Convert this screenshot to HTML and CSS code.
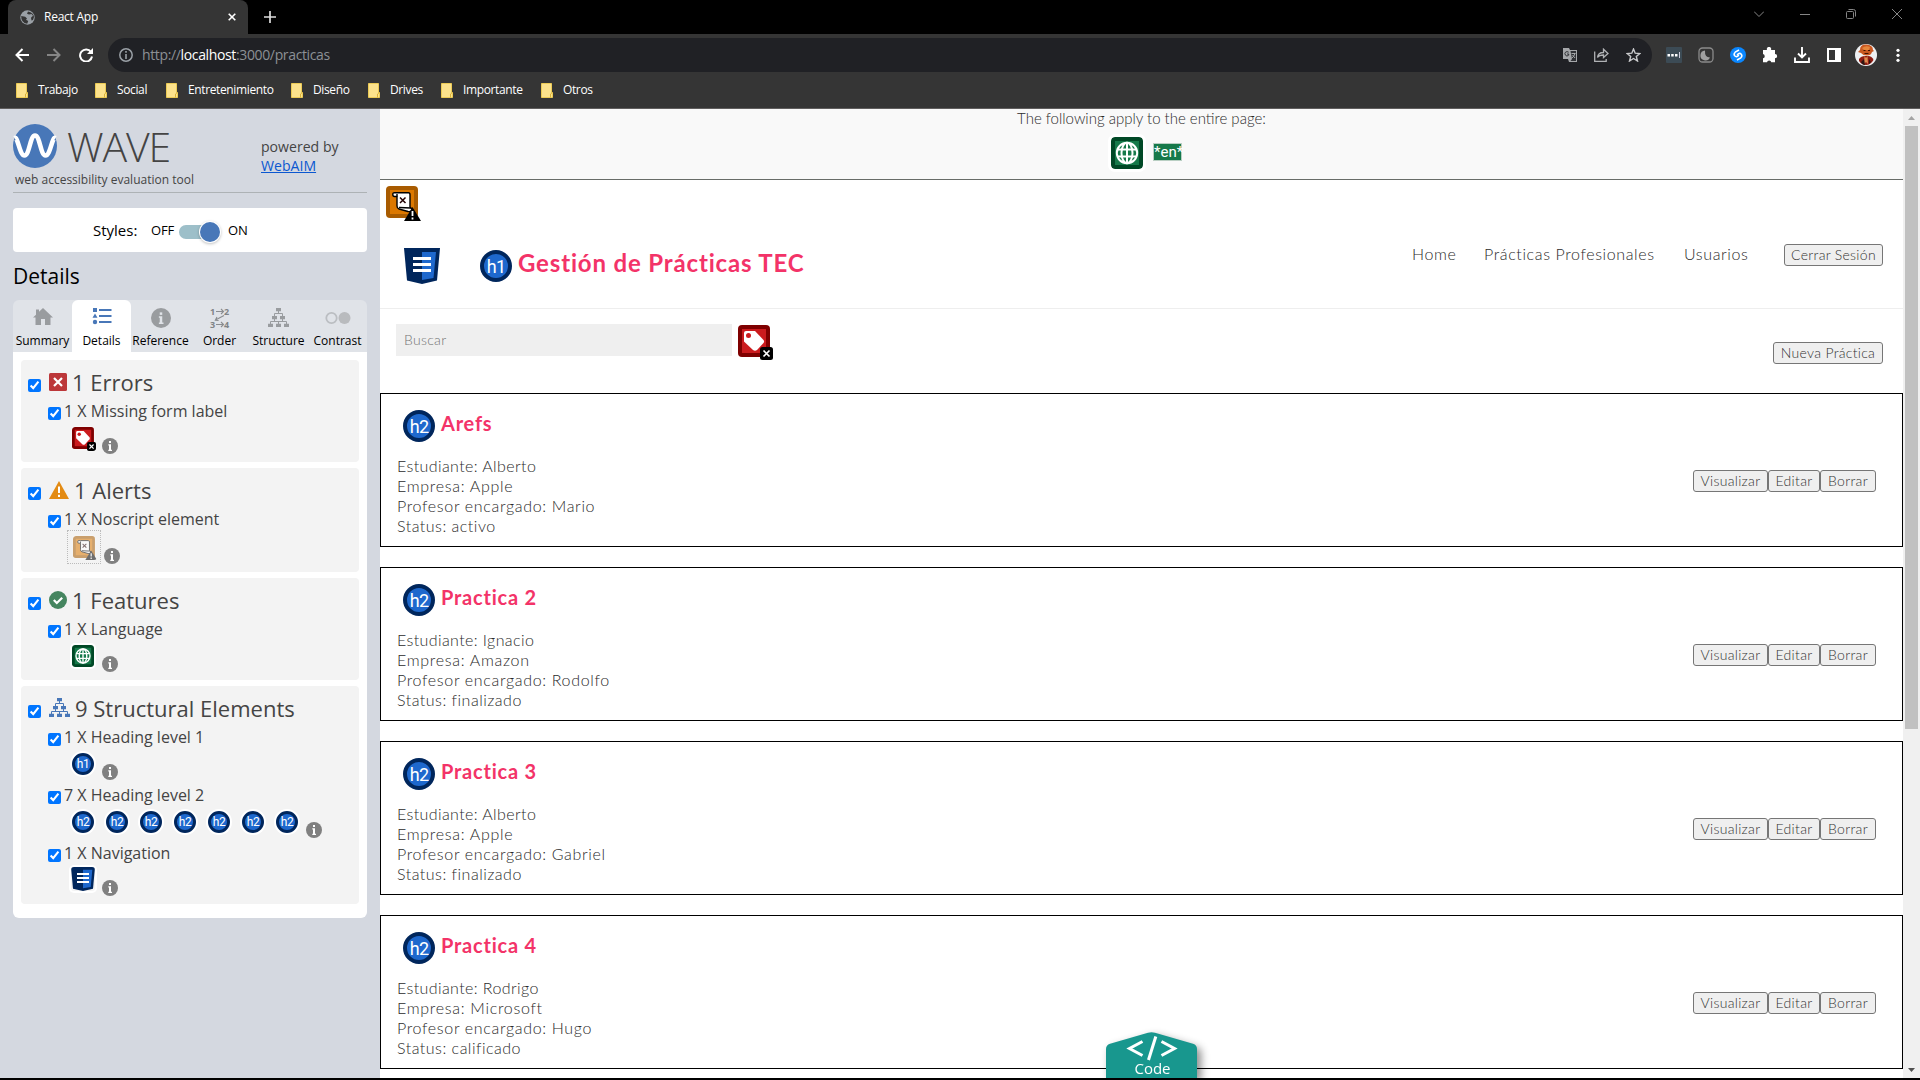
FILE: index.html
```html
<!DOCTYPE html>
<html lang="es">
<head>
<meta charset="utf-8">
<title>React App</title>
<link rel="stylesheet" href="styles.css">
</head>
<body>
<svg class="sprite" width="0" height="0">
  <symbol id="folder" viewBox="0 0 12 15"><path d="M.5.5h10v9h1v5H.5z" fill="#fce28c" stroke="#eccb55"/><path d="M9.500 14.500v-3.500l2-1.500" fill="none" stroke="#d9b23a"/></symbol>
  <symbol id="info" viewBox="0 0 16 16"><circle cx="8" cy="8" r="8" fill="#808080"/><rect x="7" y="3" width="2" height="2" fill="#fff"/><path d="M6.300 6.300H9v5.500h1v1.200H6.300v-1.200H7V7.500h-.7z" fill="#fff"/></symbol>
  <symbol id="tree" viewBox="0 0 21 19"><path d="M8 0h5v3.300H8zM4 8h5v3.200H4zM12 8h5v3.200h-5zM0 15.700h5V19H0zM8 15.700h5V19H8zM16 15.700h5V19h-5z" fill="currentColor"/><path d="M10.500 3v2.500M6.500 8V5.500h8V8M6.500 11v2.500M14.500 11v2.500M2.500 16v-2.500h16V16M10.500 13.500V16" fill="none" stroke="currentColor"/></symbol>
  <symbol id="label" viewBox="0 0 35 35"><rect width="32" height="32" rx="4" fill="#7f0000"/><rect x="4" y="4" width="24" height="24" fill="#cb1b1e"/><path d="M6 8q0-2 2-2h9l8.500 9q1.200 1.500 0 3l-6.500 7q-2 1.600-4 0L6 16.500z" fill="#fff"/><circle cx="10.500" cy="10.500" r="2.500" fill="#cb1b1e"/><rect x="22" y="22" width="13" height="13" rx="2.500" fill="#000"/><path d="M25.500 25.500l6 6m0-6l-6 6" stroke="#fff" stroke-width="1.700"/></symbol>
  <symbol id="noscript" viewBox="0 0 35 35"><rect width="32" height="32" rx="4" fill="#a85b00"/><rect x="4" y="4" width="24" height="24" fill="#dc7800"/><path d="M11 6.700h11.500q1.500 0 1.500 2V21l3 3q-2 2-5 1.500L13 23q-2-.5-2-3V10.500H8.500Q6.800 10.500 6.800 8.500t2-1.800H11z" fill="#fff" stroke="#000" stroke-width="1.400"/><path d="M11 10.500V8M13 21.500l12 .5" fill="none" stroke="#000" stroke-width="1.400"/><path d="M14 11.500l5.500 5.500m0-5.500L14 17" stroke="#200" stroke-width="1.500"/><path d="M26.500 21L35 35H18z" fill="#000"/><path d="M26.500 25v5m0 1.500v2" stroke="#fff" stroke-width="1.800"/></symbol>
  <symbol id="globe" viewBox="0 0 32 32"><rect width="32" height="32" rx="4" fill="#004826"/><rect x="4" y="4" width="24" height="24" fill="#16794a"/><g fill="none" stroke="#fff" stroke-width="2"><circle cx="16" cy="16" r="10.200"/><ellipse cx="16" cy="16" rx="5.500" ry="10.200"/><path d="M7 12.500h18M7 19.500h18M16 6v20"/></g></symbol>
  <symbol id="nav" viewBox="0 0 36 36"><path d="M0 0h36l-3 32.500L18 36 3 32.500z" fill="#00265c"/><path d="M18 4h14l-2.500 26L18 32z" fill="#1e68cd"/><path d="M9 10.500h18M9 16.500h18M9 22.500h18" stroke="#fff" stroke-width="3"/></symbol>
</svg>

<div class="window">
  <header class="chrome">
    <div class="tabstrip">
      <div class="browser-tab">
        <svg width="15" height="15" viewBox="0 0 15 15"><circle cx="7.500" cy="7.500" r="7.200" fill="#9aa0a6"/><path d="M1.200 6l4 .8 1.800 1.700-1 1.300 2.200 1.200-1 2.800Q1 13 1.200 6zM8 1.500l-1 2.300 2 .7 2.500-.5 1.500 1.800-2 2 .5 2.700 1.500-.5 1-3Q13.500 2.500 8 1.500z" fill="#353535"/></svg>
        <span class="tab-title">React App</span>
        <svg class="tab-close" width="8" height="8" viewBox="0 0 8 8"><path d="M.7.7l6.600 6.600m0-6.600L.7 7.300" stroke="#fff" stroke-width="1.600"/></svg>
      </div>
      <svg class="new-tab" width="12" height="12" viewBox="0 0 12 12"><path d="M6 0v12M0 6h12" stroke="#ddd" stroke-width="1.700"/></svg>
      <div class="window-buttons">
        <svg width="10" height="10" viewBox="0 0 10 10"><path d="M0 2.500l5 5 5-5"/></svg>
        <svg width="10" height="10" viewBox="0 0 10 10"><path d="M0 5.500h10"/></svg>
        <svg width="10" height="10" viewBox="0 0 10 10"><rect x=".5" y="2.500" width="7" height="7" rx="1"/><path d="M2.500.5h5q2 0 2 2v5"/></svg>
        <svg width="10" height="10" viewBox="0 0 10 10"><path d="M0 0l10 10m0-10L0 10"/></svg>
      </div>
    </div>
    <div class="toolbar">
      <div class="nav-buttons">
        <svg width="14" height="14" viewBox="0 0 14 14" stroke="#fff"><path d="M14 7H1.500M7.500 1L1.500 7l6 6"/></svg>
        <svg width="14" height="14" viewBox="0 0 14 14" stroke="#858585"><path d="M0 7h12.500M6.500 1l6 6-6 6"/></svg>
        <svg width="14" height="14" viewBox="0 0 14 14" stroke="#fff"><path d="M12 4A6 6 0 1 0 13 8.500"/><path d="M14 0v6H8z" fill="#fff" stroke="none"/></svg>
      </div>
      <div class="omnibox">
        <svg width="14" height="14" viewBox="0 0 14 14"><circle cx="7" cy="7" r="6.200" fill="none" stroke="#9aa0a6" stroke-width="1.500"/><path d="M7 3v1.800M7 6v5" stroke="#9aa0a6" stroke-width="1.600"/></svg>
        <span class="url">http://<b>localhost</b>:3000/practicas</span>
        <div class="omni-icons">
          <svg width="14" height="14" viewBox="0 0 14 14"><path d="M0 0h6l1 2h7v12H6l-1-3H0z" fill="#a5a7aa"/><path d="M7.500 3H13v10H7.500l1.500-2z" fill="#303236"/><path d="M5.700 4.200Q3.800 3 2.500 4.200t0 3 3.200 0V6H4" fill="none" stroke="#303236"/><path d="M8.500 5.500h4M12 5.500q-1 3-3 4.500M9.500 7l2.500 3" fill="none" stroke="#a5a7aa"/></svg>
          <svg width="15" height="14" viewBox="0 0 15 14" fill="none" stroke="#b0b2b5" stroke-width="1.300"><path d="M.7 3.500v9.800h11.500V11M3.500 9.500q.5-5 6-5V1.200L14 5.500l-4.500 4V7Q5 7 3.500 9.500z"/></svg>
          <svg width="15" height="14" viewBox="0 0 15 14"><path d="M7.500 1l1.700 4.200 4.600.3-3.500 3 1.200 4.500-4-2.500-4 2.500 1.200-4.500-3.500-3 4.600-.3z" fill="none" stroke="#c8c9cb" stroke-width="1.400"/></svg>
        </div>
      </div>
      <div class="extensions">
        <svg width="16" height="16" viewBox="0 0 16 16"><rect width="16" height="16" rx="1" fill="#3c4b55"/><path d="M1.500 7h2.500v2.500H1.500zM5.200 7h2.500v2.500H5.200zM9 7h2.500v2.500H9z" fill="#fff"/><path d="M13.500 5v6" stroke="#ccd"/></svg>
        <svg width="16" height="16" viewBox="0 0 16 16"><rect x="1" y="1" width="14" height="14" rx="3.500" fill="none" stroke="#8b8b8b" stroke-width="1.300"/><path d="M7 3.500A5 5 0 1 0 12 10.500Q6.500 10.500 7 3.500z" fill="#a0a0a0"/></svg>
        <svg width="16" height="16" viewBox="0 0 16 16"><circle cx="8" cy="8" r="8" fill="#0a87ff"/><path d="M9 3L5.200 5.200Q3.300 7 4.700 8.800q1.500 1.500 3 .3L9 8.200M7 13l3.800-2.200q1.900-1.800.5-3.600-1.500-1.500-3-.3L7 7.800" fill="none" stroke="#fff" stroke-width="1.500"/></svg>
        <svg width="16" height="16" viewBox="0 0 16 16"><path d="M1 3h4a2.200 2.200 0 1 1 4 0h4v4a2.100 2.100 0 1 1 0 4.300v4H9.300a2.200 2.200 0 0 0-4.300 0H1v-4a2.200 2.200 0 0 0 0-4.300z" fill="#fff"/></svg>
        <svg width="16" height="16" viewBox="0 0 16 16" fill="none" stroke="#fff" stroke-width="1.900"><path d="M8 0v10M4 6.500l4 4 4-4M1 10.500V15h14v-4.500"/></svg>
        <svg width="16" height="16" viewBox="0 0 16 16"><path d="M1 1h14v14H1zM3 3v10h6V3z" fill="#fff" fill-rule="evenodd"/></svg>
        <svg width="22" height="22" viewBox="0 0 22 22"><circle cx="11" cy="11" r="11" fill="#eef0f2"/><path d="M5 6q0-6 6.500-5.500T18 6l1 1-2 1q-1 3.500-5 3.500T6 9L3 8z" fill="#c95821"/><path d="M7 4q4-3 8-1l-1 3H9z" fill="#e6863b"/><path d="M8.500 6.500h2m2.500 0h2M9.500 9.500h4" stroke="#401000" stroke-width="1.200"/><path d="M4 15q2-3 6-3h3q4 0 5.500 4-3 5-7.500 5T4 17z" fill="#8f1c12"/><path d="M9.500 12l1.500 2 1.500-2 .5 8-2-2-2 2z" fill="#e08a50"/><path d="M6 18l3-3 1 6q-3 0-4-3zM14 15l2 3-2 2z" fill="#2d1512"/></svg>
        <svg width="16" height="16" viewBox="0 0 16 16" fill="#fff"><circle cx="8" cy="3.300" r="1.600"/><circle cx="8" cy="8.300" r="1.600"/><circle cx="8" cy="13.300" r="1.600"/></svg>
      </div>
    </div>
    <nav class="bookmarks">
      <span class="bm bm1"><svg><use href="#folder"/></svg>Trabajo</span>
      <span class="bm bm2"><svg><use href="#folder"/></svg>Social</span>
      <span class="bm bm3"><svg><use href="#folder"/></svg>Entretenimiento</span>
      <span class="bm bm4"><svg><use href="#folder"/></svg>Diseño</span>
      <span class="bm bm5"><svg><use href="#folder"/></svg>Drives</span>
      <span class="bm bm6"><svg><use href="#folder"/></svg>Importante</span>
      <span class="bm bm7"><svg><use href="#folder"/></svg>Otros</span>
    </nav>
  </header>

  <div class="content">
    <aside class="wave">
      <div class="brand">
        <div class="brand-left">
          <div class="logo">
            <svg width="44" height="44" viewBox="0 0 44 44"><circle cx="22" cy="22" r="22" fill="#4877b8"/><path d="M1.500 14C5 12 6.500 31.500 11.500 31.500S17 11.500 22 11.500 27.500 31.500 32.500 31.500 39 12 42.500 14" fill="none" stroke="#fff" stroke-width="4.600"/></svg>
            <span class="logo-text">WAVE</span>
          </div>
          <p class="tagline">web accessibility evaluation tool</p>
        </div>
        <p class="powered">powered by<br><a>WebAIM</a></p>
      </div>
      <div class="styles-card">
        <span class="styles-label">Styles:</span><span class="off">OFF</span>
        <span class="toggle"><i></i></span><span class="on">ON</span>
      </div>
      <h2 class="details-title">Details</h2>
      <div class="wave-tabs">
        <div class="wtab"><svg width="20" height="20" viewBox="0 0 20 20"><path d="M10 0L20 9.500h-2.500V17H12v-6H8v6H2.500V9.500H0L3 6.700V1.500h3v2.300z" fill="currentColor"/></svg><span class="t1">Summary</span></div>
        <div class="wtab active"><svg width="20" height="20" viewBox="0 0 20 20"><path d="M1 0h4v4H1zM3 5.500l2.500 4.300h-5z" fill="currentColor"/><circle cx="3" cy="14" r="2.200" fill="currentColor"/><path d="M7 2h12.500M7 8h12.500M7 14h12.500" stroke="currentColor" stroke-width="2"/></svg><span class="t2">Details</span></div>
        <div class="wtab"><svg width="20" height="20" viewBox="0 0 16 16"><circle cx="8" cy="8" r="8" fill="currentColor"/><rect x="7" y="3.500" width="2" height="2" fill="#e0e3e8"/><path d="M6.300 6.500H9v5h1v1.200H6.300v-1.200H7V7.700h-.7z" fill="#e0e3e8"/></svg><span class="t3">Reference</span></div>
        <div class="wtab"><svg class="order" width="20" height="20" viewBox="0 0 20 20"><g fill="none" stroke="#8a8d90" stroke-width="1.100"><path d="M6 3.500h7.500M11 1l2.500 2.500L11 6M6 16.500h7.500M11 14l2.500 2.500L11 19M14 7.500l-8.500 4.500M7 9l-1.700 3.200 3.300.3"/></g><g class="digits"><text x="0" y="7">1</text><text x="14" y="7">2</text><text x="0" y="20">3</text><text x="14" y="20">4</text></g></svg><span class="t4">Order</span></div>
        <div class="wtab"><svg width="21" height="20"><use href="#tree" width="21" height="19"/></svg><span class="t5">Structure</span></div>
        <div class="wtab"><svg width="26" height="20" viewBox="0 0 26 20"><circle cx="6.500" cy="10" r="5.200" fill="none" stroke="#bbbec2" stroke-width="1.800"/><circle cx="19.500" cy="10" r="6" fill="#b9bbbe"/></svg><span class="t6">Contrast</span></div>
      </div>
      <div class="panel">
        <section class="group">
          <h3><input type="checkbox" checked><svg width="18" height="18" viewBox="0 0 18 18"><rect width="18" height="18" rx="1.500" fill="#bc3739"/><path d="M5 5l8 8m0-8l-8 8" stroke="#fff" stroke-width="2.200"/></svg><span>1 Errors</span></h3>
          <div class="item"><p><input type="checkbox" checked><span>1 X Missing form label</span></p>
            <div class="icons"><svg class="ic ic-label"><use href="#label"/></svg><svg class="info"><use href="#info"/></svg></div></div>
        </section>
        <section class="group">
          <h3><input type="checkbox" checked><svg width="20" height="18" viewBox="0 0 20 18"><path d="M10 0l10 18H0z" fill="#e38b14"/><path d="M10 5.500v6.500m0 1.800v2.200" stroke="#fff" stroke-width="2"/></svg><span>1 Alerts</span></h3>
          <div class="item tall"><p><input type="checkbox" checked><span>1 X Noscript element</span></p>
            <div class="icons"><span class="dotted"><svg class="ic ic-label"><use href="#noscript"/></svg></span><svg class="info"><use href="#info"/></svg></div></div>
        </section>
        <section class="group">
          <h3><input type="checkbox" checked><svg width="18" height="18" viewBox="0 0 18 18"><circle cx="9" cy="9" r="9" fill="#45855f"/><path d="M4.800 9l3 3 5.400-5.200" fill="none" stroke="#fff" stroke-width="2.200"/></svg><span>1 Features</span></h3>
          <div class="item"><p><input type="checkbox" checked><span>1 X Language</span></p>
            <div class="icons"><svg class="ic"><use href="#globe"/></svg><svg class="info"><use href="#info"/></svg></div></div>
        </section>
        <section class="group">
          <h3><input type="checkbox" checked><svg class="tree" width="21" height="19"><use href="#tree"/></svg><span>9 Structural Elements</span></h3>
          <div class="item"><p><input type="checkbox" checked><span>1 X Heading level 1</span></p>
            <div class="icons"><span class="hb sm">h1</span><svg class="info"><use href="#info"/></svg></div></div>
          <div class="item"><p><input type="checkbox" checked><span>7 X Heading level 2</span></p>
            <div class="icons"><span class="hb sm">h2</span><span class="hb sm">h2</span><span class="hb sm">h2</span><span class="hb sm">h2</span><span class="hb sm">h2</span><span class="hb sm">h2</span><span class="hb sm">h2</span><svg class="info"><use href="#info"/></svg></div></div>
          <div class="item"><p><input type="checkbox" checked><span>1 X Navigation</span></p>
            <div class="icons"><svg class="ic ic-nav"><use href="#nav"/></svg><svg class="info"><use href="#info"/></svg></div></div>
        </section>
      </div>
    </aside>

    <main class="page">
      <div class="page-wide">
        <p>The following apply to the entire page:</p>
        <div class="page-wide-icons"><svg class="big-globe"><use href="#globe"/></svg><span class="lang">*en*</span></div>
      </div>
      <div class="noscript-row"><svg width="35" height="35"><use href="#noscript"/></svg></div>
      <div class="site-header">
        <svg width="36" height="36"><use href="#nav"/></svg>
        <span class="hb">h1</span>
        <h1>Gestión de Prácticas TEC</h1>
        <nav class="links"><a class="l1">Home</a><a class="l2">Prácticas Profesionales</a><a class="l3">Usuarios</a><button class="b-cerrar">Cerrar Sesión</button></nav>
      </div>
      <div class="search-row">
        <input class="search" type="text" placeholder="Buscar">
        <svg class="search-icon" width="35" height="35"><use href="#label"/></svg>
        <button class="b-nueva">Nueva Práctica</button>
      </div>
      <div class="cards">
        <article class="card"><div><h2><span class="hb">h2</span>Arefs</h2><p class="student">Estudiante: Alberto</p><p class="company">Empresa: Apple</p><p class="teacher">Profesor encargado: Mario</p><p>Status: activo</p></div><div class="actions"><button class="b-v">Visualizar</button><button class="b-e">Editar</button><button class="b-b">Borrar</button></div></article>
        <article class="card"><div><h2><span class="hb">h2</span>Practica 2</h2><p class="student">Estudiante: Ignacio</p><p class="company">Empresa: Amazon</p><p class="teacher">Profesor encargado: Rodolfo</p><p>Status: finalizado</p></div><div class="actions"><button class="b-v">Visualizar</button><button class="b-e">Editar</button><button class="b-b">Borrar</button></div></article>
        <article class="card"><div><h2><span class="hb">h2</span>Practica 3</h2><p class="student">Estudiante: Alberto</p><p class="company">Empresa: Apple</p><p class="teacher">Profesor encargado: Gabriel</p><p>Status: finalizado</p></div><div class="actions"><button class="b-v">Visualizar</button><button class="b-e">Editar</button><button class="b-b">Borrar</button></div></article>
        <article class="card"><div><h2><span class="hb">h2</span>Practica 4</h2><p class="student">Estudiante: Rodrigo</p><p class="company">Empresa: Microsoft</p><p class="teacher">Profesor encargado: Hugo</p><p>Status: calificado</p></div><div class="actions"><button class="b-v">Visualizar</button><button class="b-e">Editar</button><button class="b-b">Borrar</button></div></article>
      </div>
      <div class="code-tab">
        <svg width="91" height="46" viewBox="0 0 91 46"><path d="M0 46V17q0-4 4-5.300L42 .8q3.500-1 7 0l38 10.900q4 1.300 4 5.300v29z" fill="#18978e"/><path d="M36.500 9.500L23.500 16.500l13 7M55.500 9.500l13 7-13 7" fill="none" stroke="#fff" stroke-width="3"/><path d="M49.800 4.500L42.500 28" stroke="#fff" stroke-width="3"/></svg>
        <span>Code</span>
      </div>
    </main>
    <div class="scrollbar"><svg width="7" height="4" viewBox="0 0 7 4"><path d="M3.500 0L7 4H0z" fill="#a3a3a3"/></svg><div class="thumb"></div><svg class="down" width="7" height="4" viewBox="0 0 7 4"><path d="M3.500 4L7 0H0z" fill="#505050"/></svg></div>
  </div>
</div>
</body>
</html>
```
FILE: styles.css
```css
* { box-sizing: border-box; margin: 0; padding: 0; }
body { width: 1920px; height: 1080px; overflow: hidden; background: #000; font-family: "Open Sans", sans-serif; }
svg { display: block; flex: none; }
.sprite { position: absolute; }
p, h1, h2, h3, span, a, button { white-space: nowrap; }
.window { display: flex; flex-direction: column; height: 1078px; }

/* browser chrome */
.chrome { height: 109px; background: #353535; border-bottom: 1px solid #605e5e; flex: none; }
.tabstrip { height: 34px; background: #000; display: flex; padding-left: 8px; }
.browser-tab { width: 240px; background: #353535; border-radius: 8px 8px 0 0; display: flex; align-items: center; padding: 0 12px 0; height: 34px; }
.tab-title { font-size: 12px; line-height: 16px; letter-spacing: -.25px; color: #fff; margin: 0 0 1px 9px; flex: 1; }
.new-tab { margin: 11px 0 0 16px; }
.window-buttons { margin: 9px 18px 0 auto; display: flex; gap: 36px; }
.window-buttons svg { fill: none; stroke: #858585; stroke-width: 1; }
.toolbar { height: 42px; display: flex; align-items: center; padding: 0 14px 0 15px; }
.nav-buttons { display: flex; gap: 18px; width: 93px; }
.nav-buttons svg { fill: none; stroke-width: 2; }
.omnibox { width: 1544px; height: 34px; border-radius: 17px; background: #202125; display: flex; align-items: center; padding: 0 11px; }
.url { font-size: 14px; line-height: 20px; color: #8c9095; margin-left: 9px; letter-spacing: -.36px; }
.url b { font-weight: 400; color: #fff; }
.omni-icons { display: flex; gap: 17px; margin-left: auto; }
.extensions { display: flex; align-items: center; gap: 16px; margin-left: 14px; }
.extensions svg:nth-child(7) { margin: 0 -3px; }
.bookmarks { display: flex; height: 32px; align-items: center; padding: 0 0 3px 16px; font-size: 12px; color: #fff; }
.bm { display: flex; align-items: center; gap: 10px; letter-spacing: -.37px; line-height: 16px; padding-bottom: 1px; }
.bm svg { width: 12px; height: 15px; margin-bottom: -1px; }
.bm1 { width: 79px; } .bm2 { width: 71px; } .bm3 { width: 125px; } .bm4 { width: 77px; } .bm5 { width: 73px; } .bm6 { width: 100px; }

.content { display: flex; flex: 1; min-height: 0; }

/* evaluation sidebar */
.wave { width: 380px; background: #d4d8e0; padding: 15px 13px 0; color: #000; }
.brand { display: flex; height: 69px; border-bottom: 1px solid #adb2b5; color: #444; }
.brand-left { width: 248px; }
.logo { display: flex; height: 44px; }
.logo-text { font-size: 41px; font-weight: 300; line-height: 44px; margin-left: 10px; letter-spacing: -1.1px; }
.tagline { font-size: 12px; line-height: 18px; margin: 3px 0 0 2px; }
.powered { font-size: 14.100px; line-height: 19px; margin-top: 13px; }
.powered a { color: #0b57d0; text-decoration: underline; }
.styles-card { margin-top: 15px; height: 44px; border-radius: 4px; background: #fff; display: flex; align-items: center; padding-left: 80px; }
.styles-label { font-size: 15px; width: 58px; }
.off { font-size: 13px; width: 28px; letter-spacing: -.2px; }
.on { font-size: 13px; margin-left: 8px; letter-spacing: -.2px; }
.toggle { width: 41px; height: 14px; border-radius: 7px; background: #9dbfc9; position: relative; top: 2px; }
.toggle i { position: absolute; right: 0; top: -3px; width: 20px; height: 20px; border-radius: 50%; background: #4877b8; box-shadow: 0 0 0 1px #fff, 0 1px 3px 1px rgba(0,0,0,.25); }
.details-title { font-size: 21px; font-weight: 400; line-height: 28px; height: 48px; padding-top: 10px; }
.wave-tabs { display: grid; grid-template-columns: repeat(6, 59px); height: 52px; background: #e0e3e8; border-radius: 6px 6px 0 0; }
.wtab { display: flex; flex-direction: column; align-items: center; padding-top: 8px; color: #999c9f; border-radius: 6px 6px 0 0; font-size: 12px; }
.wtab span { color: #000; line-height: 16px; margin-top: 5px; }
.wtab.active { background: #fff; color: #4877b8; }
.order { overflow: visible; }
.digits { font: bold 9px "Open Sans", sans-serif; fill: #808386; }
.panel { background: #fff; height: 566px; border-radius: 0 0 6px 6px; padding: 8px; display: flex; flex-direction: column; gap: 6px; }
.group { background: #f3f3f3; border-radius: 4px; padding: 0 7px 5px; }
.group h3 { height: 39px; display: flex; align-items: flex-start; font-weight: 400; font-size: 22px; line-height: 30px; color: #444; }
.group h3 input { margin: 19px 8px 0 0; }
.group h3 svg { margin: 13px 5px 0 0; color: #4877b8; }
.group h3 svg.tree { margin: 12px 5px 0 0; }
.group h3 span { margin-top: 7px; }
input[type=checkbox] { width: 13px; height: 13px; flex: none; accent-color: #0075ff; }
.item { height: 58px; padding-left: 20px; color: #444; font-size: 16px; }
.item.tall { height: 60px; }
.item p { display: flex; height: 24px; line-height: 24px; }
.item p input { margin: 8px 3px 0 0; }
.icons { display: flex; padding: 4px 0 0 24px; }
.tall .icons { padding: 0 0 0 19px; margin-top: -1px; }
.ic { width: 22px; height: 22px; border-radius: 3px; box-shadow: 0 0 0 2px #fff; }
.ic-label { width: 24px; height: 24px; box-shadow: none; filter: drop-shadow(0 0 1px #fff); }
.ic-nav { width: 24px; height: 24px; margin: -2px -1px 0; }
.dotted { width: 34px; height: 34px; border: 1px dotted #bbb; padding: 5px; margin-top: 0; }
.dotted .ic { opacity: .55; }
.info { width: 16px; height: 16px; margin: 11px 0 0 8px; }
.ic-label + .info { margin-left: 6px; }
.tall .info { margin: 18px 0 0 3px; }

.hb { width: 32px; height: 32px; flex: none; border: 4px solid #00265c; border-radius: 50%; background: #1e68cd; color: #fff; font: 400 18px/26px Roboto, sans-serif; text-align: center; letter-spacing: -.8px; display: block; }
.hb.sm { width: 22px; height: 22px; border-width: 3px; font-size: 12px; line-height: 17px; letter-spacing: -.4px; box-shadow: 0 0 0 2px #fff; margin-right: 12px; }
.hb.sm + .info { margin-left: -4px; }

/* evaluated page */
.page { width: 1523px; height: 969px; background: #fff; overflow: hidden; position: relative; font: 300 16px/20px Lato, sans-serif; color: #2b2b2b; }
.page-wide { height: 71px; background: #f9f9f9; border-bottom: 1px solid #686c68; }
.page-wide p { text-align: center; font-size: 15px; line-height: 18px; height: 28px; }
.page-wide-icons { display: flex; padding-left: 731px; }
.big-globe { width: 32px; height: 32px; box-shadow: 0 0 0 3px #fff; border-radius: 4px; }
.lang { margin: 6px 0 0 10px; width: 29px; height: 18px; border: 1px solid #b9cfc3; background: #16794a; color: #fff; font: 400 15px/17px Roboto, sans-serif; text-align: center; }
.noscript-row { height: 68px; padding: 6px; }
.site-header { height: 61px; border-bottom: 1px solid #eee; display: flex; padding-left: 24px; }
.site-header .hb { margin: 2px 0 0 40px; }
h1 { font-size: 24px; font-weight: 700; line-height: 30px; color: #f33368; margin-left: 6px; letter-spacing: .84px; }
.links { margin-left: auto; display: flex; padding-right: 20px; align-items: flex-start; margin-top: -4px; letter-spacing: .62px; }
.links a { line-height: 20px; }
.l1 { width: 72px; } .l2 { width: 200px; } .l3 { width: 100px; }
button { font: 300 14px/18px Lato, sans-serif; height: 22px; border: 1px solid #767676; border-radius: 3px; background: #efefef; color: #333; letter-spacing: .3px; text-align: center; }
.b-cerrar { width: 99px; } .b-nueva { width: 110px; margin: 33px 20px 0 auto; }
.b-v { width: 75px; } .b-e { width: 52px; } .b-b { width: 56px; }
.search-row { height: 84px; display: flex; padding-left: 16px; }
.search { width: 336px; height: 32px; margin-top: 15px; background: #efefef; border: 0; padding: 0 0 2px 8px; font: 300 14px Lato, sans-serif; letter-spacing: .3px; }
.search::placeholder { color: #757575; }
.search-icon { margin: 16px 0 0 6px; }
.cards { display: flex; flex-direction: column; gap: 20px; }
.card { height: 154px; flex: none; border: 1px solid #000; display: flex; justify-content: space-between; padding: 16px 26px 0 16px; }
.card h2 { font-size: 20px; font-weight: 700; color: #f33368; line-height: 27px; display: flex; gap: 6px; padding-left: 6px; height: 46px; letter-spacing: .78px; }
.card p { letter-spacing: .5px; }
.card .student { letter-spacing: .4px; }
.card .company { letter-spacing: .7px; }
.card .teacher { letter-spacing: .66px; }
.actions { display: flex; margin-top: 60px; }
.code-tab { position: absolute; left: 726px; top: 923px; width: 91px; height: 46px; filter: drop-shadow(4px 4px 4px rgba(0,0,0,.45)); }
.code-tab span { position: absolute; left: 2px; right: 0; top: 26px; text-align: center; color: #fff; font: 400 15px/20px "Open Sans", sans-serif; }

.scrollbar { width: 17px; background: #f0f0f0; display: flex; flex-direction: column; align-items: center; padding-top: 7px; }
.thumb { width: 13px; height: 603px; margin-top: 6px; background: #c1c1c1; }
.scrollbar .down { margin: auto 0 6px; }
```
